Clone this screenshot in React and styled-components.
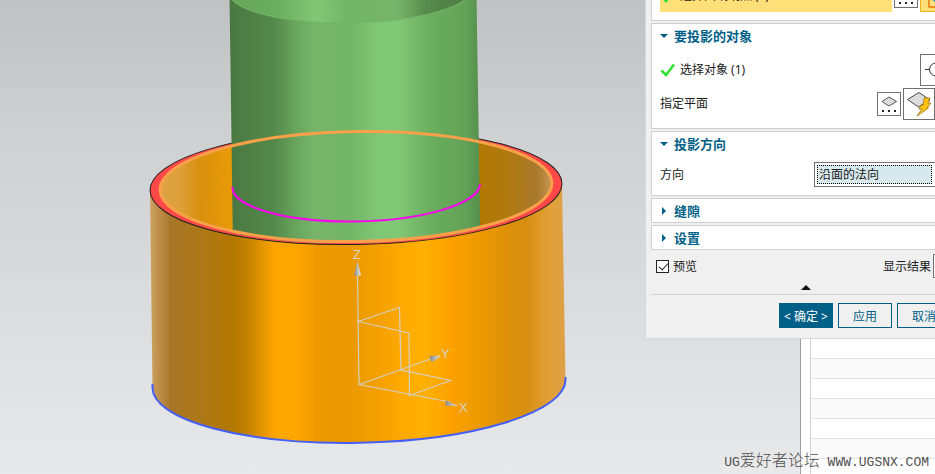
import React, { useState } from 'react';
import styled, { createGlobalStyle } from 'styled-components';

const rows = Array.from({ length: 23 }, (_, i) => i);

const Arrow = ({ open }) => (
    <svg width="8" height="8" viewBox="0 0 8 8" aria-hidden="true">
        <path d={open ? 'M0 2h8L4 6z' : 'M2 0v8L6 4z'} fill="#005f87" />
    </svg>
);

const Check = () => (
    <svg width="16" height="14" viewBox="0 0 16 14" aria-hidden="true">
        <path d="M1.500 7.500 6 12 14 1.500" fill="none" stroke="#2fe02f" strokeWidth="2.500" />
    </svg>
);

// plane with three dots under it
const PlaneDots = () => (
    <svg width="22" height="22" viewBox="0 0 22 22" aria-hidden="true">
        <path d="M4 8.500 11 4l7.500 4.500L11 13z" fill="#dcdcdc" stroke="#555" />
        <path d="M4 17h2v2H4zM10 17h2v2h-2zM16 17h2v2h-2z" fill="#222" />
    </svg>
);

const PlaneBolt = () => (
    <svg width="30" height="30" viewBox="0 0 30 30" aria-hidden="true">
        <path d="M3.500 10.500 15 3.500l11 7.500-11.500 7z" fill="#dcdcdc" stroke="#444" />
        <path d="M20 9h6l-2 5h3l-4 5h1.500L13 27l5-7h-3l2-4h2z" fill="#ffc20e" stroke="#9a7420" strokeWidth=".8" />
    </svg>
);

const Crosshair = () => (
    <svg width="30" height="30" viewBox="0 0 30 30" aria-hidden="true">
        <path d="M4 14.500h22M14.500 4v21" stroke="#333" />
        <circle cx="15" cy="14.500" r="6.500" fill="#fff" stroke="#333" />
    </svg>
);

const CurveIcon = () => (
    <svg width="30" height="30" viewBox="0 0 30 30" aria-hidden="true">
        <path d="M8 5h14v21H8z" fill="none" stroke="#e87a10" strokeWidth="1.500" />
        <path d="M12 18l6 5" stroke="#18a0b8" strokeWidth="2" />
    </svg>
);

const Model = () => (
    <svg width="800" height="474" viewBox="0 0 800 474" role="img" aria-label="3D">
        <defs>
            <linearGradient id="tube" gradientUnits="userSpaceOnUse" x1="230" x2="480" y1="0" y2="0">
                <stop offset="0" stopColor="#4a7742" />
                <stop offset=".18" stopColor="#558a4b" />
                <stop offset=".26" stopColor="#68a45d" />
                <stop offset=".34" stopColor="#77b56b" />
                <stop offset=".48" stopColor="#72b666" />
                <stop offset=".6" stopColor="#81c876" />
                <stop offset=".67" stopColor="#81c876" />
                <stop offset=".8" stopColor="#6bae5f" />
                <stop offset=".94" stopColor="#62a257" />
                <stop offset="1" stopColor="#568f4d" />
            </linearGradient>
            <linearGradient id="tubeInside" gradientUnits="userSpaceOnUse" x1="230" x2="475" y1="0" y2="0">
                <stop offset="0" stopColor="#66a65b" />
                <stop offset=".2" stopColor="#6bae60" />
                <stop offset=".35" stopColor="#81c876" />
                <stop offset=".48" stopColor="#72b566" />
                <stop offset=".68" stopColor="#77b46b" />
                <stop offset=".8" stopColor="#578b4c" />
                <stop offset="1" stopColor="#4a7742" />
            </linearGradient>
            <linearGradient id="ring" gradientUnits="userSpaceOnUse" x1="150" x2="566" y1="0" y2="0">
                <stop offset="0" stopColor="#cfa264" />
                <stop offset=".05" stopColor="#a87628" />
                <stop offset=".13" stopColor="#ae7916" />
                <stop offset=".2" stopColor="#b47800" />
                <stop offset=".235" stopColor="#c48300" />
                <stop offset=".3" stopColor="#ffa500" />
                <stop offset=".35" stopColor="#ffa600" />
                <stop offset=".4" stopColor="#ee9a00" />
                <stop offset=".47" stopColor="#e89800" />
                <stop offset=".54" stopColor="#f29f00" />
                <stop offset=".61" stopColor="#ffaa00" />
                <stop offset=".66" stopColor="#ffb000" />
                <stop offset=".72" stopColor="#fda200" />
                <stop offset=".79" stopColor="#ec9a00" />
                <stop offset=".9" stopColor="#d68d10" />
                <stop offset=".96" stopColor="#e2a038" />
                <stop offset="1" stopColor="#dca048" />
            </linearGradient>
            <linearGradient id="ringInside" gradientUnits="userSpaceOnUse" x1="160" x2="552" y1="0" y2="0">
                <stop offset="0" stopColor="#e0a448" />
                <stop offset=".05" stopColor="#dc9f38" />
                <stop offset=".1" stopColor="#d8900f" />
                <stop offset=".18" stopColor="#e89a06" />
                <stop offset=".5" stopColor="#e89a06" />
                <stop offset=".8" stopColor="#b47800" />
                <stop offset=".9" stopColor="#af7a14" />
                <stop offset=".96" stopColor="#a8782c" />
                <stop offset="1" stopColor="#c89858" />
            </linearGradient>
            <linearGradient id="cone" x1="0" x2="1" y1="0" y2="0">
                <stop offset="0" stopColor="#858585" />
                <stop offset="1" stopColor="#ececec" />
            </linearGradient>
            <clipPath id="aboveRim">
                <path d="M200-50H520V186H552A196 55-1 0 1 160 190H200z" />
            </clipPath>
        </defs>

        {/* outer ring */}
        <path d="M150 190 152.500 388A206.500 59-1.200 0 0 565.500 379.500L562 183.500z" fill="url(#ring)" />
        <path d="M152.500 384V388A206.500 59-1.200 0 0 565.500 379.500V377" fill="none" stroke="#4560f5" strokeWidth="2" />
        <ellipse cx="356" cy="187" rx="206" ry="57.500" transform="rotate(-1 356 187)" fill="#ff4848" stroke="#222" />
        <ellipse cx="356" cy="186.500" rx="196" ry="55" transform="rotate(-1 356 186)" fill="url(#ringInside)" />

        {/* inner tube */}
        <g clipPath="url(#aboveRim)">
            <path d="M229.500-5 233 250H480.500L476.500-5z" fill="url(#tube)" />
        </g>
        <ellipse cx="351" cy="-10" rx="122" ry="33" transform="rotate(-1 351 -10)" fill="url(#tubeInside)" stroke="#70b765" />
        <path d="M232.500 187A123 35.700-1 0 0 480 184" fill="none" stroke="#ff00f0" strokeWidth="2" />
        <ellipse cx="356" cy="186.500" rx="196" ry="55" transform="rotate(-1 356 186)" fill="none" stroke="#f8a04a" strokeWidth="3" />

        {/* axes */}
        <g fill="none" stroke="#d3cfc2" strokeWidth="1.200">
            <path d="M357.500 272 359 384.500 450 402M359 384.500 432 358.500" />
            <path d="M358 321.500 399.500 307.500 401 370 450.500 380.500 409.500 395.500 409 333z" />
        </g>
        <g fill="url(#cone)">
            <path d="M357.500 261 361 275.500H354z" />
            <path d="M441 355.500 429.500 356 431 361.500 434 361z" />
            <path d="M458.500 406 446 400.500 445 405.500z" />
        </g>
        <AxisName x="353" y="259">Z</AxisName>
        <AxisName x="441" y="358">Y</AxisName>
        <AxisName x="459" y="412">X</AxisName>
    </svg>
);

const App = () => {
    const [preview, setPreview] = useState(true);

    return (
        <Page>
            <GlobalStyle />
            <Viewport>
                <Model />
            </Viewport>
            <Navigator>
                <Rows>
                    {rows.map(item => <NavRow key={item} />)}
                </Rows>
            </Navigator>

            <Dialog>
                <Group>
                    <Line>
                        <Picked><Check />选择曲线或点 (1)</Picked>
                        <IconButton aria-label="点对话框"><PlaneDots /></IconButton>
                        <IconButton $large $active aria-label="曲线"><CurveIcon /></IconButton>
                    </Line>
                </Group>

                <Group>
                    <Title><Arrow open />要投影的对象</Title>
                    <Line $top={7}>
                        <Name><Check />选择对象 (1)</Name>
                        <IconButton $large aria-label="选择对象"><Crosshair /></IconButton>
                    </Line>
                    <Line $top={2}>
                        <Name>指定平面</Name>
                        <IconButton aria-label="平面对话框"><PlaneDots /></IconButton>
                        <IconButton $large aria-label="自动判断"><PlaneBolt /></IconButton>
                        <Drop aria-label="更多"><Arrow open /></Drop>
                    </Line>
                </Group>

                <Group>
                    <Title><Arrow open />投影方向</Title>
                    <Line $top={7}>
                        <Name as="label" htmlFor="direction">方向</Name>
                        <SelectFrame>
                            <Select id="direction">
                                <option>沿面的法向</option>
                            </Select>
                            <Arrow open />
                        </SelectFrame>
                    </Line>
                </Group>

                <Group $closed>
                    <Title><Arrow />缝隙</Title>
                </Group>
                <Group $closed>
                    <Title><Arrow />设置</Title>
                </Group>

                <PreviewRow>
                    <PreviewLabel>
                        <Box type="checkbox" checked={preview} onChange={e => setPreview(e.target.checked)} />
                        预览
                    </PreviewLabel>
                    <span>显示结果</span>
                    <IconButton aria-label="显示结果" />
                </PreviewRow>
                <Collapse aria-label="收起">
                    <svg width="10" height="6" viewBox="0 0 10 6"><path d="M5 0 10 5H0z" fill="#111" /></svg>
                </Collapse>
                <Footer>
                    <Button $primary>&lt; 确定 &gt;</Button>
                    <Button>应用</Button>
                    <Button>取消</Button>
                </Footer>
            </Dialog>

            <Watermark><Latin>UG</Latin>爱好者论坛<Latin> WWW.UGSNX.COM</Latin></Watermark>
        </Page>
    );
};

export default App;

const GlobalStyle = createGlobalStyle`
    * {
        box-sizing: border-box;
    }
    body {
        margin: 0;
    }
    body, button, select, input {
        font-family: "Noto Sans", "Noto Sans CJK SC", sans-serif;
        font-size: 12px;
        color: #1a1a1a;
    }
`;

const Page = styled.main`
    position: relative;
    display: grid;
    grid-template-columns: minmax(0, 1fr) 135px;
    height: 100vh;
    overflow: hidden;
`;
const Viewport = styled.div`
    overflow: hidden;
    background: linear-gradient(#c0c1c3, #cfd0d2 28%, #dddee0 70%, #e8e9eb);

    svg {
        display: block;
    }
`;
const AxisName = styled.text`
    font-family: "Liberation Sans", sans-serif;
    font-size: 13px;
    fill: #d8d2c0;
`;

const Navigator = styled.aside`
    padding-left: 9px;
    border-left: 1px solid #a0a0a0;
    background: #fff;
    overflow: hidden;
`;
const Rows = styled.div`
    height: 100%;
    padding-top: 19px;
    border-left: 1px solid #d0d0d0;
`;
const NavRow = styled.div`
    height: 20px;
    border-bottom: 1px solid #e4e4e4;

    &:nth-child(even) {
        background: #fafafa;
    }
`;

const Dialog = styled.section`
    position: absolute;
    right: -30px;
    bottom: 135px;
    width: 320px;
    padding: 4px 4px 4px 5px;
    border: 1px solid #d8d8d8;
    background: #f0f0f0;
`;
const Group = styled.section`
    margin-bottom: 2px;
    padding: 0 7px ${props => (props.$closed ? 0 : 8)}px 8px;
    border: 1px solid #d0d0d0;
    background: #fff;
`;
const Title = styled.h2`
    display: flex;
    align-items: center;
    gap: 6px;
    height: 23px;
    margin: 0;
    font-size: 13px;
    font-weight: 700;
    color: #005f87;
`;
const Line = styled.div`
    display: flex;
    align-items: center;
    gap: 2px;
    margin-top: ${props => props.$top || 0}px;
`;
const Name = styled.div`
    display: flex;
    flex: 1;
    align-items: center;
    gap: 4px;
    line-height: 20px;
`;
const Picked = styled(Name)`
    height: 32px;
    background: #ffe078;
`;
const IconButton = styled.button`
    display: flex;
    align-items: center;
    justify-content: center;
    width: ${props => (props.$large ? 32 : 24)}px;
    height: ${props => (props.$large ? 32 : 24)}px;
    padding: 0;
    border: 1px solid ${props => (props.$active ? '#f0b020' : '#707070')};
    background: ${props => (props.$active ? '#ffe078' : '#fff')};
`;
const Drop = styled.button`
    width: 15px;
    height: 32px;
    padding: 0;
    border: 0;
    background: #fff;
`;
const SelectFrame = styled.div`
    display: flex;
    align-items: center;
    gap: 5px;
    width: 138px;
    height: 25px;
    padding: 2px;
    border: 1px solid #707070;
`;
const Select = styled.select`
    appearance: none;
    width: 115px;
    height: 19px;
    padding: 0 1px;
    border: 1px dotted #000;
    border-radius: 0;
    outline: 0;
    background: #d8e9ee;
`;
const PreviewRow = styled.div`
    display: flex;
    align-items: center;
    gap: 2px;
    height: 28px;
    padding: 0 3px 0 5px;
`;
const PreviewLabel = styled.label`
    display: flex;
    flex: 1;
    align-items: center;
    gap: 4px;
`;
const Box = styled.input`
    appearance: none;
    width: 13px;
    height: 13px;
    margin: 0;
    border: 1px solid #222;
    background: #fff;

    &:checked::before {
        content: '';
        display: block;
        width: 4px;
        height: 8px;
        margin-left: 4px;
        border: solid #222;
        border-width: 0 1px 1px 0;
        transform: rotate(42deg);
    }
`;
const Collapse = styled.button`
    display: flex;
    align-items: flex-end;
    justify-content: center;
    width: 100%;
    height: 15px;
    padding: 0 0 3px;
    border: 0;
    border-bottom: 1px solid #d0d0d0;
    background: none;
`;
const Footer = styled.div`
    display: flex;
    justify-content: flex-end;
    gap: 5px;
    padding: 8px 9px 6px;
`;
const Button = styled.button`
    width: 54px;
    height: 25px;
    padding: 0;
    border: 1px solid #005f87;
    background: ${props => (props.$primary ? '#005f87' : '#f0f0f0')};
    color: ${props => (props.$primary ? '#fff' : '#005f87')};
    white-space: nowrap;
`;

const Watermark = styled.div`
    position: absolute;
    right: 6px;
    bottom: 1px;
    font-family: "Noto Sans CJK SC", sans-serif;
    font-size: 16px;
    font-weight: 300;
    line-height: 20px;
    color: #505050;
    white-space: pre;
`;
const Latin = styled.span`
    font-family: "Liberation Mono", monospace;
    font-size: 13px;
`;
